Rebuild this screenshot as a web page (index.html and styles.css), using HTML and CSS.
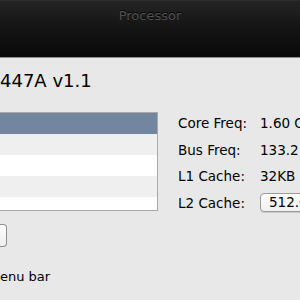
FILE: index.html
```html
<!DOCTYPE html>
<html>
<head>
<meta charset="utf-8">
<link rel="stylesheet" href="styles.css">
</head>
<body>
<div class="window">
  <div class="titlebar"><span class="title">Processor</span></div>
  <div class="content">
    <h1 class="cpu-name">447A v1.1</h1>
    <div class="main">
      <div class="list">
        <div class="row selected"></div>
        <div class="row alt"></div>
        <div class="row"></div>
        <div class="row alt"></div>
        <div class="row"></div>
      </div>
      <div class="specs">
        <div class="spec"><span class="label">Core Freq:</span><span class="value">1.60 GHz</span></div>
        <div class="spec"><span class="label">Bus Freq:</span><span class="value">133.2 MHz</span></div>
        <div class="spec"><span class="label">L1 Cache:</span><span class="value">32KB I, 32KB D</span></div>
        <div class="spec"><span class="label">L2 Cache:</span><span class="popup">512.0 KB</span></div>
      </div>
    </div>
    <div class="button"></div>
    <div class="check">enu bar</div>
  </div>
</div>
</body>
</html>
```
FILE: styles.css
```css
html, body {
  margin: 0;
  padding: 0;
  width: 300px;
  height: 300px;
  overflow: hidden;
  background: #e8e8e8;
}
.window {
  width: 300px;
  height: 300px;
  font-family: "DejaVu Sans", sans-serif;
  color: #000;
  white-space: nowrap;
}
.titlebar {
  height: 58px;
  box-sizing: border-box;
  padding-top: 5px;
  text-align: center;
  background: linear-gradient(#3a3a3a 0px, #242424 1px, #141414 28px, #090909 57px);
  border-bottom: 1px solid #8c8c8c;
}
.title {
  font-size: 13px;
  line-height: 16px;
  color: #505050;
  text-shadow: 0 -1px 0 #000;
}
.content {
  display: flex;
  flex-direction: column;
  align-items: flex-start;
}
.cpu-name {
  margin: 12px 0 0 0;
  font-size: 18px;
  font-weight: normal;
  line-height: 21px;
  color: #000;
}
.main {
  display: flex;
  margin-top: 21px;
  gap: 20px;
}
.list {
  width: 158px;
  height: 99px;
  box-sizing: border-box;
  border: 1px solid #a8a8a8;
  border-left: none;
  background: #fff;
  overflow: hidden;
}
.row {
  height: 21px;
  background: #fff;
}
.row.alt {
  background: #efefef;
}
.row.selected {
  background: #7386a0;
}
.specs {
  display: flex;
  flex-direction: column;
  margin-top: -2px;
  font-size: 13.5px;
  overflow: hidden;
}
.spec {
  display: flex;
  align-items: center;
  height: 26.5px;
  line-height: 26.5px;
}
.label {
  width: 82px;
  flex: none;
  color: #000;
}
.value {
  color: #000;
}
.popup {
  box-sizing: border-box;
  height: 19px;
  line-height: 17px;
  padding: 0 8px;
  border: 1px solid #9a9a9a;
  border-radius: 4px;
  background: linear-gradient(#ffffff, #f0f0f0);
  box-shadow: 0 1px 0 rgba(0,0,0,0.12);
  color: #000;
}
.button {
  margin-top: 8px;
  width: 7px;
  height: 23px;
  box-sizing: border-box;
  border: 1px solid #8e8e8e;
  border-left: none;
  border-radius: 0 4px 4px 0;
  background: linear-gradient(#ffffff, #eeeeee);
}
.check {
  margin-top: 22px;
  font-size: 13px;
  line-height: 16px;
  color: #000;
}
```
